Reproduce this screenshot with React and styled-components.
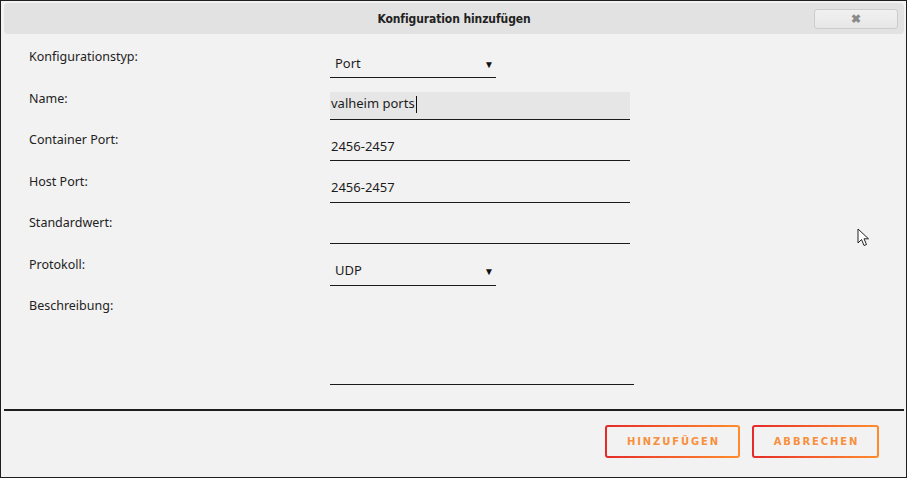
import React from "react";
import styled, { createGlobalStyle } from "styled-components";

const GlobalStyle = createGlobalStyle`
  html, body {
    margin: 0;
    padding: 0;
    background: #f2f2f2;
  }
  body {
    font-family: "Noto Sans", "Open Sans", sans-serif;
    -webkit-font-smoothing: antialiased;
  }
`;

const Window = styled.div`
  position: relative;
  box-sizing: border-box;
  width: 907px;
  height: 478px;
  border: 1px solid #1e1e1e;
  background: #f2f2f2;
  display: flex;
  flex-direction: column;
  padding: 2px 2px 0 3px;
`;

const TitleBar = styled.div`
  height: 31px;
  flex-shrink: 0;
  border-radius: 4px;
  background: #e2e2e2;
  display: flex;
  align-items: center;
  justify-content: center;
  position: relative;
`;

const Title = styled.div`
  font-family: "DejaVu Sans Condensed", "Liberation Sans Narrow", sans-serif;
  font-weight: bold;
  font-size: 12px;
  color: #222;
  letter-spacing: -0.1px;
`;

const CloseButton = styled.button`
  position: absolute;
  right: 6px;
  top: 6px;
  width: 84px;
  height: 20px;
  box-sizing: border-box;
  border: 1px solid #cdcdcd;
  border-radius: 3px;
  background: linear-gradient(#f0f0f0 0%, #ececec 50%, #e6e6e6 100%);
  color: #8a8a8a;
  font-size: 12px;
  font-weight: bold;
  display: flex;
  align-items: center;
  justify-content: center;
  padding: 0;
`;

const Form = styled.div`
  display: flex;
  flex-direction: column;
  gap: 13.5px;
  padding: 16px 0 0 25px;
  flex: 1;
`;

const Row = styled.div`
  display: grid;
  grid-template-columns: 301px 1fr;
  align-items: start;
`;

const Label = styled.div`
  font-size: 12.5px;
  line-height: 14px;
  color: #222;
`;

const Field = styled.div`
  box-sizing: border-box;
  width: ${(p) => p.$width}px;
  height: ${(p) => p.$height || 28}px;
  border-bottom: 1px solid #1a1a1a;
  background: ${(p) => (p.$filled ? "#e6e6e6" : "transparent")};
  display: flex;
  align-items: center;
  justify-content: space-between;
  padding: ${(p) => (p.$select ? "0 2px 0 5px" : "0 0 0 1px")};
  font-size: 13px;
  color: #1c1c1c;
  line-height: 1;
  padding-top: ${(p) => (p.$select ? "0" : "0")};
  padding-bottom: 1px;
`;

const Caret = styled.span`
  display: inline-block;
  width: 1px;
  height: 17px;
  background: #111;
  margin-left: 1px;
  vertical-align: middle;
`;

const Arrow = styled.span`
  font-size: 10px;
  color: #111;
  margin-top: 1px;
`;

const Separator = styled.div`
  height: 2px;
  flex-shrink: 0;
  background: #1e1e1e;
`;

const Footer = styled.div`
  box-sizing: border-box;
  height: 66px;
  flex-shrink: 0;
  display: flex;
  justify-content: flex-end;
  align-items: flex-start;
  gap: 12px;
  padding: 14px 25px 0 0;
`;

const GradButton = styled.button`
  box-sizing: border-box;
  height: 33px;
  width: ${(p) => p.$width}px;
  border: 2px solid transparent;
  border-radius: 3px;
  background: linear-gradient(#f2f2f2, #f2f2f2) padding-box,
    linear-gradient(90deg, #e42a2a 0%, #f25a2c 45%, #ff8c2c 100%) border-box;
  color: #f78f3c;
  font-family: "DejaVu Sans", sans-serif;
  font-weight: bold;
  font-size: 10px;
  letter-spacing: 1.9px;
  padding: 0 0 0 2px;
`;

const Pointer = styled.svg`
  position: absolute;
  left: 856px;
  top: 227px;
`;

const rows = [
  { label: "Konfigurationstyp:", select: true, value: "Port", width: 166 },
  { label: "Name:", value: "valheim ports", width: 300, filled: true, caret: true },
  { label: "Container Port:", value: "2456-2457", width: 300 },
  { label: "Host Port:", value: "2456-2457", width: 300 },
  { label: "Standardwert:", value: "", width: 300 },
  { label: "Protokoll:", select: true, value: "UDP", width: 166 },
  { label: "Beschreibung:", value: "", width: 304, height: 86 },
];

export default function App() {
  return (
    <>
      <GlobalStyle />
      <Window>
        <TitleBar>
          <Title>Konfiguration hinzufügen</Title>
          <CloseButton>✖</CloseButton>
        </TitleBar>
        <Form>
          {rows.map((r) => (
            <Row key={r.label}>
              <Label>{r.label}</Label>
              <Field
                $width={r.width}
                $height={r.height}
                $select={r.select}
                $filled={r.filled}
              >
                <span>
                  {r.value}
                  {r.caret && <Caret />}
                </span>
                {r.select && <Arrow>▼</Arrow>}
              </Field>
            </Row>
          ))}
        </Form>
        <Separator />
        <Footer>
          <GradButton $width={135}>HINZUFÜGEN</GradButton>
          <GradButton $width={127}>ABBRECHEN</GradButton>
        </Footer>
        <Pointer width="13" height="20" viewBox="0 0 13 20">
          <path
            d="M1 1 L1 15 L4.5 11.5 L7 17.5 L9.5 16.5 L7 10.8 L11.5 10.8 Z"
            fill="#fff"
            stroke="#222"
            strokeWidth="1"
            strokeLinejoin="round"
          />
        </Pointer>
      </Window>
    </>
  );
}
